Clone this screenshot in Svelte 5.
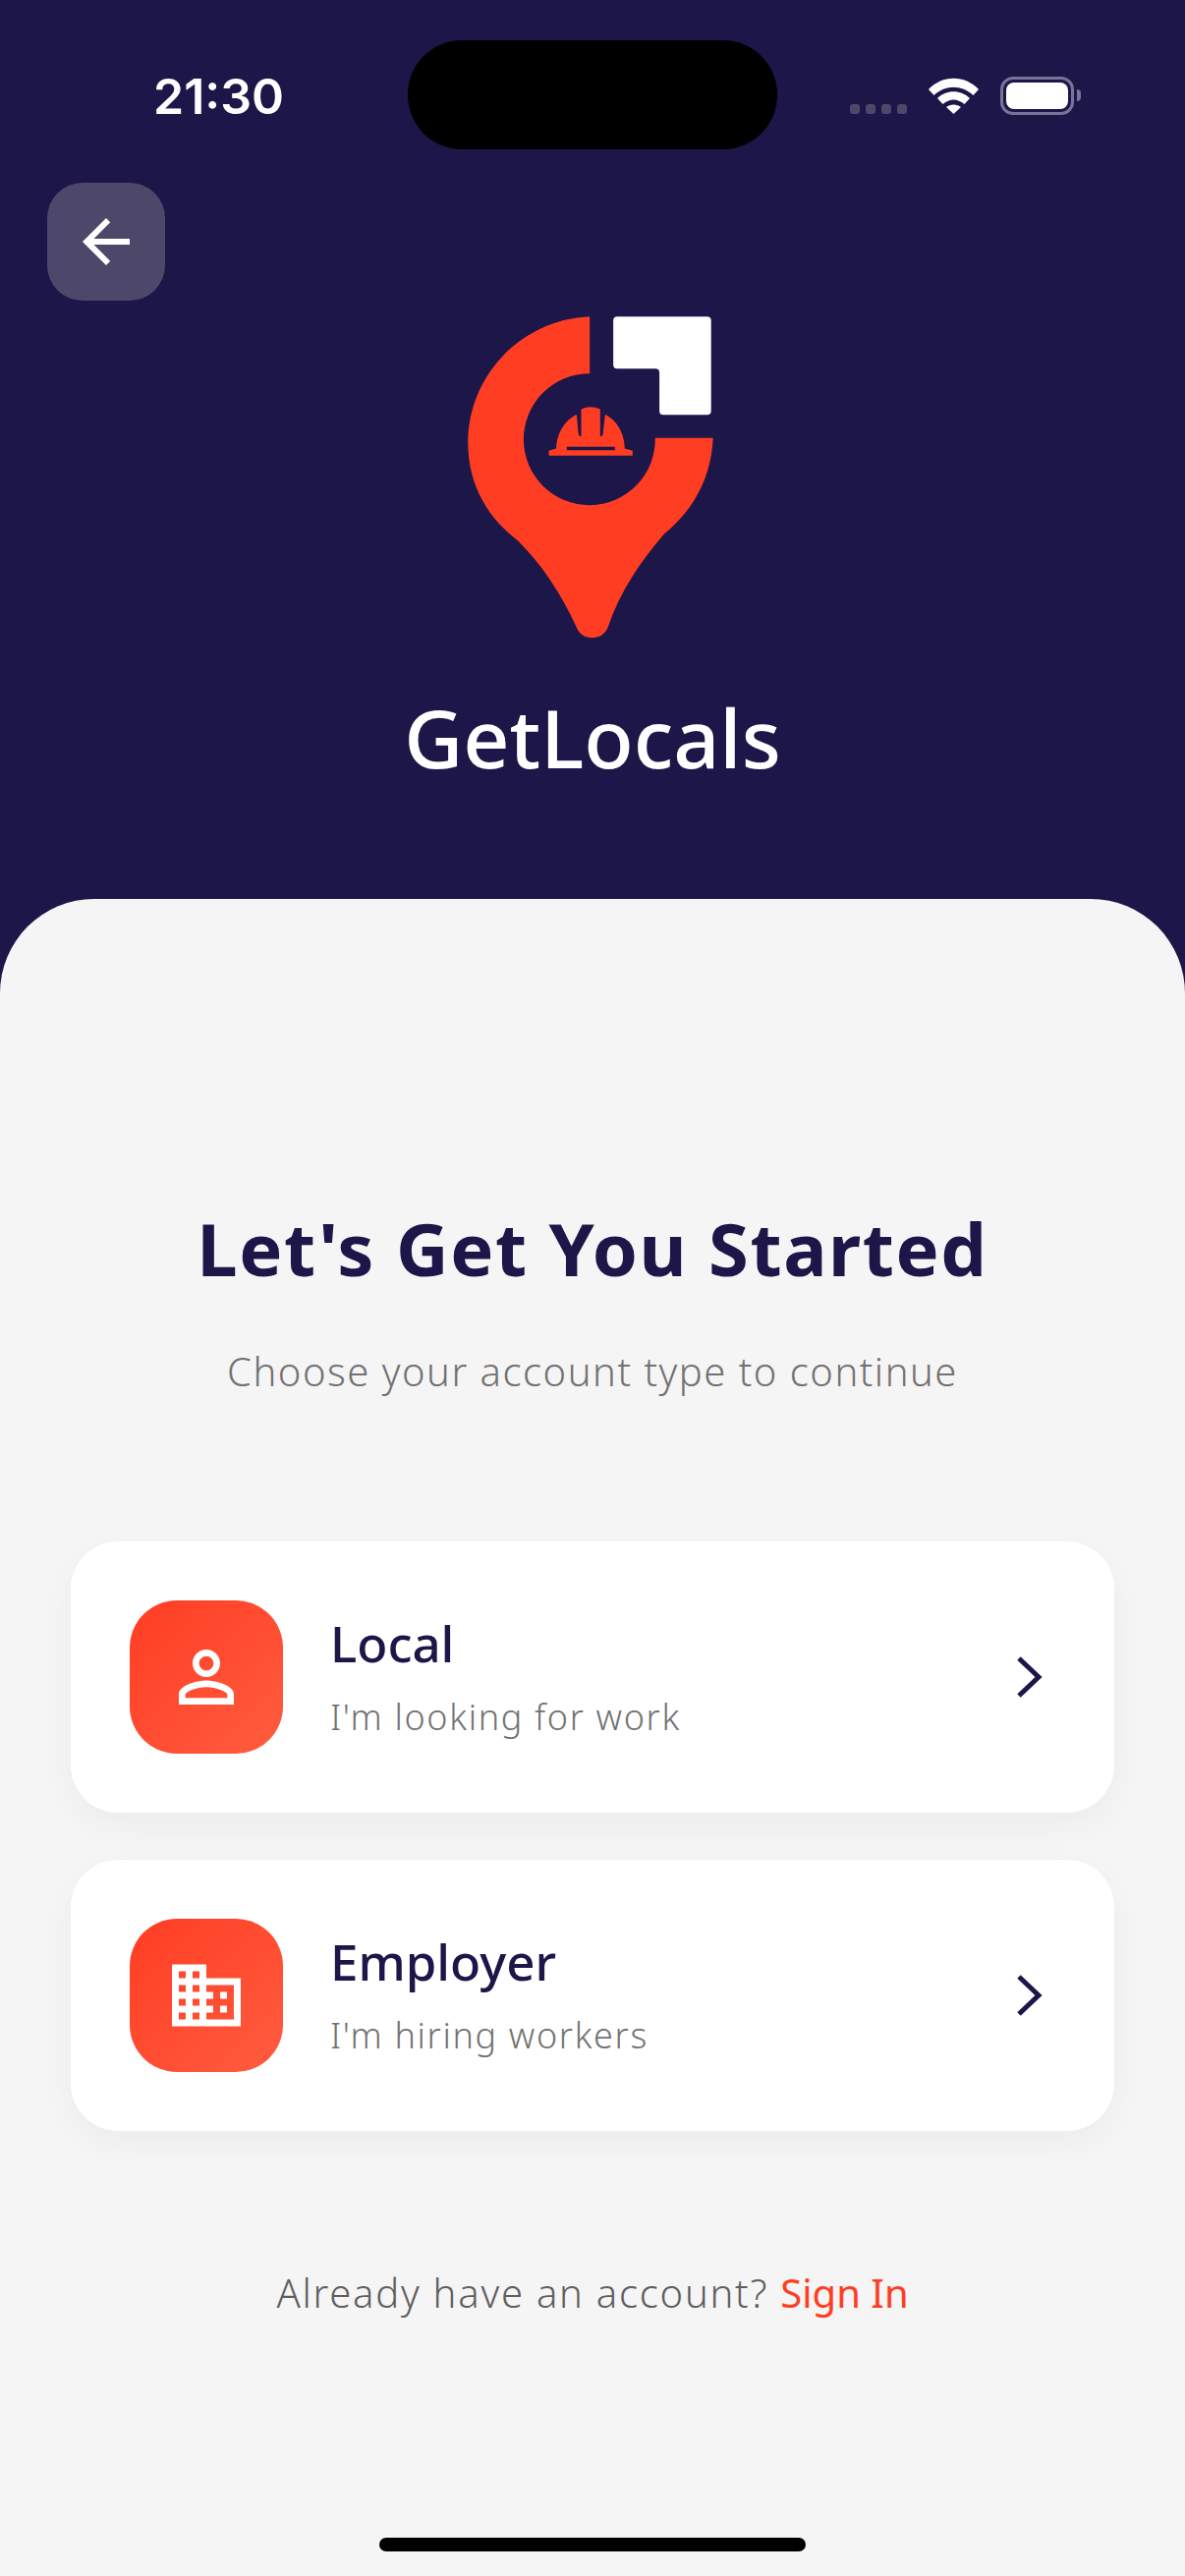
<script lang="ts">
  // Account type picker: navy header with the logo, light sheet with two choices.
  const choices = [
    { title: 'Local', sub: "I'm looking for work", icon: 'person' },
    { title: 'Employer', sub: "I'm hiring workers", icon: 'domain' }
  ];
</script>

<div class="screen">
  <header class="top">
    <div class="status">
      <span class="time">21:30</span>
      <span class="island"></span>
      <div class="status-icons">
        <span class="dots"><i></i><i></i><i></i><i></i></span>
        <svg class="wifi" viewBox="0 0 51 37" aria-hidden="true">
          <path d="M0 12 C14 -3 37 -3 51 12 L45.500 18 C34 7 17 7 5.500 18 Z" fill="#fff" />
          <path d="M9 21 C18 12 33 12 42 21 L36.500 27 C29 21 22 21 14.500 27 Z" fill="#fff" />
          <path d="M18 30 C22 26.500 29 26.500 33 30 L25.500 37 Z" fill="#fff" />
        </svg>
        <span class="battery"><span class="cell"></span></span>
        <span class="battery-tip"></span>
      </div>
    </div>

    <button class="back" aria-label="Back">
      <svg viewBox="0 0 24 24" aria-hidden="true">
        <path d="M20 11H7.830l5.590-5.590L12 4l-8 8 8 8 1.410-1.410L7.830 13H20v-2z" fill="#fff" />
      </svg>
    </button>

    <!-- coordinates are 3x the logo's pixels -->
    <svg class="logo" viewBox="100 60 770 1000" aria-hidden="true">
      <path
        fill="#ff3d23"
        d="M481 67 V241 A201 201 0 1 0 681 438 H858 C852 560 800 655 710 730 C640 810 575 905 537 1015 C522 1060 455 1060 440 1015 C395 915 335 825 262 752 C165 680 109 575 109 452 C109 245 275 75 481 67 Z"
      />
      <path
        fill="#ff3d23"
        fill-rule="evenodd"
        d="M356 492 V477 L379 470 C379 425 405 382 441 366 L447 428 Q448 433 455 433 V350 Q484 336 513 350 V433 Q520 433 521 428 L528 366 C564 382 588 425 588 470 L612 477 V492 Z M411 465 V475 H558 V465 Z"
      />
      <path
        fill="#fff"
        d="M565 67 H840 Q852 67 852 79 V355 Q852 367 840 367 H706 Q694 367 694 355 V238 Q694 226 682 226 H565 Q553 226 553 214 V79 Q553 67 565 67 Z"
      />
    </svg>

    <h1 class="brand">GetLocals</h1>
  </header>

  <main class="sheet">
    <h2>Let's Get You Started</h2>
    <p class="lead">Choose your account type to continue</p>

    <div class="choices">
      {#each choices as c}
        <button class="card">
          <span class="badge">
            <svg viewBox="0 0 24 24" aria-hidden="true">
              {#if c.icon === 'person'}
                <path
                  fill="#fff"
                  d="M12 5.900c1.160 0 2.100.940 2.100 2.100s-.940 2.100-2.100 2.100S9.900 9.160 9.900 8s.940-2.100 2.100-2.100m0 9c2.970 0 6.100 1.460 6.100 2.100v1.100H5.900V17c0-.640 3.130-2.100 6.100-2.100M12 4C9.790 4 8 5.790 8 8s1.790 4 4 4 4-1.790 4-4-1.790-4-4-4zm0 9c-2.670 0-8 1.340-8 4v3h16v-3c0-2.660-5.330-4-8-4z"
                />
              {:else}
                <path
                  fill="#fff"
                  d="M12 7V3H2v18h20V7H12zM6 19H4v-2h2v2zm0-4H4v-2h2v2zm0-4H4V9h2v2zm0-4H4V5h2v2zm4 12H8v-2h2v2zm0-4H8v-2h2v2zm0-4H8V9h2v2zm0-4H8V5h2v2zm10 12h-8v-2h2v-2h-2v-2h2v-2h-2V9h8v10zm-2-8h-2v2h2v-2zm0 4h-2v2h2v-2z"
                />
              {/if}
            </svg>
          </span>
          <span class="copy">
            <span class="title">{c.title}</span>
            <span class="sub">{c.sub}</span>
          </span>
          <svg class="chev" viewBox="0 0 30 48" aria-hidden="true">
            <path d="M5 5 L25 24 L5 43" fill="none" stroke="#1c1649" stroke-width="5" />
          </svg>
        </button>
      {/each}
    </div>

    <p class="signin">Already have an account? <a href="#signin">Sign In</a></p>

    <span class="home"></span>
  </main>
</div>

<style>
  :global(body) {
    margin: 0;
    background: #1c1649;
  }

  .screen {
    width: 1206px;
    height: 2622px;
    display: flex;
    flex-direction: column;
    font-family: "Noto Sans", sans-serif;
    overflow: hidden;
  }

  .top {
    height: 915px;
    flex: none;
    display: flex;
    flex-direction: column;
    background: #1c1649;
  }

  .status {
    height: 111px;
    padding: 41px 0 0 156px;
    display: flex;
    align-items: flex-start;
  }

  .time {
    width: 259px;
    margin-top: 27px;
    color: #fff;
    font: 600 50px/60px Inter, sans-serif;
  }

  .island {
    width: 376px;
    height: 111px;
    border-radius: 55px;
    background: #000;
  }

  .status-icons {
    margin: 37px 0 0 74px;
    display: flex;
    align-items: flex-start;
  }

  .dots {
    display: flex;
    gap: 6px;
    margin-top: 28px;
    width: 80px;
  }

  .dots i {
    width: 10px;
    height: 10px;
    border-radius: 3px;
    background: #4d4869;
  }

  .wifi {
    width: 51px;
    height: 37px;
    margin-top: 1px;
  }

  .battery {
    margin-left: 22px;
    width: 75px;
    height: 39px;
    box-sizing: border-box;
    border: 3px solid #77739a;
    border-radius: 13px;
    padding: 3px;
    display: flex;
  }

  .cell {
    flex: 1;
    border-radius: 8px;
    background: #fff;
  }

  .battery-tip {
    width: 4px;
    height: 12px;
    margin: 13px 0 0 3px;
    border-radius: 0 4px 4px 0;
    background: #77739a;
  }

  .back {
    width: 120px;
    height: 120px;
    margin: 34px 0 0 48px;
    padding: 24px;
    border: 0;
    border-radius: 36px;
    background: #4d4869;
    display: flex;
  }

  .back svg {
    width: 72px;
    height: 72px;
  }

  .logo {
    width: 257px;
    height: 333px;
    margin: 14px 0 0 473px;
    flex: none;
  }

  .brand {
    margin: 47px 0 0;
    text-align: center;
    color: #fff;
    font-size: 82.500px;
    line-height: 100px;
    font-weight: 500;
  }

  .sheet {
    flex: 1;
    min-height: 0;
    display: flex;
    flex-direction: column;
    align-items: center;
    padding: 0 72px;
    background: #f5f5f5;
    border-radius: 96px 96px 0 0;
  }

  h2 {
    margin: 311px 0 0;
    color: #1c1649;
    font-size: 74px;
    line-height: 90px;
    font-weight: 700;
    letter-spacing: 1.600px;
  }

  .lead {
    margin: 53px 0 0;
    color: #727272;
    font-size: 40px;
    line-height: 54px;
    font-weight: 300;
    letter-spacing: 1.500px;
  }

  .choices {
    width: 100%;
    margin-top: 146px;
    display: flex;
    flex-direction: column;
    gap: 48px;
  }

  .card {
    height: 276px;
    padding: 0 60px;
    border: 0;
    border-radius: 48px;
    background: #fff;
    box-shadow: 0 12px 36px rgba(0, 0, 0, 0.04);
    display: flex;
    align-items: center;
    text-align: left;
    font-family: inherit;
  }

  .badge {
    width: 156px;
    height: 156px;
    flex: none;
    border-radius: 48px;
    background: linear-gradient(135deg, #ff3d23, #ff5c3f);
    display: flex;
    align-items: center;
    justify-content: center;
  }

  .badge svg {
    width: 84px;
    height: 84px;
  }

  .copy {
    flex: 1;
    margin: 0 0 3px 48px;
    display: flex;
    flex-direction: column;
    gap: 21px;
  }

  .title {
    color: #1c1649;
    font-size: 51px;
    line-height: 64px;
    font-weight: 500;
  }

  .sub {
    color: #727272;
    font-size: 36px;
    line-height: 46px;
    font-weight: 300;
    letter-spacing: 1.650px;
  }

  .chev {
    width: 30px;
    height: 48px;
    flex: none;
    margin-right: 12px;
  }

  .signin {
    margin: 138px 0 0;
    color: #5f5f5f;
    font-size: 40px;
    line-height: 54px;
    font-weight: 300;
    letter-spacing: 1.750px;
  }

  .signin a {
    color: #ff3d23;
    font-weight: 400;
    letter-spacing: 0;
    text-decoration: none;
  }

  .home {
    width: 434px;
    height: 14px;
    margin-top: auto;
    margin-bottom: 25px;
    border-radius: 7px;
    background: #000;
  }
</style>
